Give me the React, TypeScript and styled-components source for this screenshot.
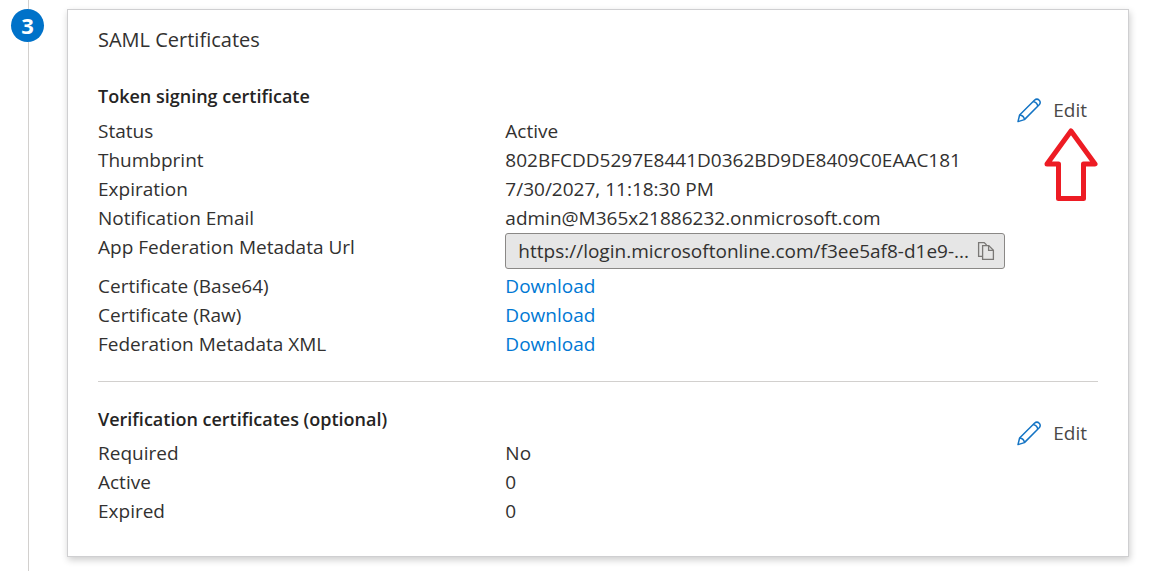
import React from "react";
import styled, { createGlobalStyle } from "styled-components";

const GlobalStyle = createGlobalStyle`
  * { box-sizing: border-box; }
  body {
    margin: 0;
    background: #fff;
    color: #323130;
    font-family: "Segoe UI", "Open Sans", "Noto Sans", sans-serif;
    font-size: 19px;
    line-height: 29px;
  }
`;

const Page = styled.main`
  display: flex;
  gap: 22px;
  padding: 0 34px 0 11px;
`;

const Stepper = styled.div`
  display: flex;
  flex-direction: column;
  align-items: center;
  flex: none;
  width: 34px;
`;

const Connector = styled.span<{ $grow?: boolean }>`
  width: 1px;
  height: 9px;
  flex: ${(p) => (p.$grow ? "1 0 auto" : "none")};
  background: #d2d0ce;
`;

const StepBadge = styled.span`
  display: flex;
  align-items: center;
  justify-content: center;
  align-self: flex-start;
  width: 33px;
  height: 33px;
  border-radius: 50%;
  background: #0072c9;
  color: #fff;
  font-size: 22px;
  font-weight: 700;
`;

const Card = styled.article`
  flex: 1;
  min-width: 0;
  margin: 9px 0 14px;
  padding: 15px 30px 30px;
  border: 1px solid #cfcfd1;
  background: #fff;
  box-shadow: 1px 3px 7px rgba(0, 0, 0, 0.2);
`;

const CardTitle = styled.h1`
  margin: 0 0 28px;
  font-size: 20px;
  line-height: 29px;
  font-weight: 400;
`;

const Section = styled.section`
  position: relative;
  display: flex;
  align-items: flex-start;

  & + & {
    margin-top: 22px;
    padding-top: 23px;
    border-top: 1px solid #d2d0ce;
  }
`;

const SectionBody = styled.div`
  flex: 1;
  min-width: 0;
`;

const SectionTitle = styled.h2`
  margin: 0 0 6px;
  font-size: 18px;
  line-height: 29px;
  font-weight: 600;
  color: #252423;

  ${Section} + ${Section} & {
    margin-bottom: 5px;
  }
`;

const Details = styled.table`
  width: 100%;
  table-layout: fixed;
  border-collapse: collapse;
`;

const Label = styled.th`
  width: 44.9%;
  padding: 0;
  text-align: left;
  vertical-align: top;
  font-weight: 400;
`;

const Value = styled.td`
  padding: 0;
  vertical-align: top;
`;

const DownloadLink = styled.a`
  color: #0078d4;
  text-decoration: none;
`;

const UrlField = styled.div`
  display: flex;
  align-items: center;
  height: 36px;
  margin-bottom: 3px;
  padding: 0 9px 0 12px;
  border: 1px solid #8a8886;
  border-radius: 3px;
  background: #e6e6e6;
`;

const UrlInput = styled.input`
  flex: 1;
  min-width: 0;
  height: 29px;
  padding: 0;
  border: 0;
  outline: 0;
  background: transparent;
  color: inherit;
  font: inherit;
  text-overflow: ellipsis;
`;

const CopyButton = styled.button`
  display: flex;
  padding: 0;
  border: 0;
  background: transparent;
  color: #7a7876;
  cursor: pointer;
`;

const EditButton = styled.button`
  display: flex;
  align-items: center;
  gap: 12px;
  flex: none;
  padding: 14px 11px 14px 12px;
  border: 0;
  background: transparent;
  color: #4a4948;
  font: inherit;
  cursor: pointer;
`;

const Pointer = styled.svg`
  position: absolute;
  top: 45px;
  right: 0;
`;

const PencilIcon = () => (
  <svg width="24" height="26" viewBox="0 1 24 26" fill="none" stroke="#1474c4" strokeWidth="1.5" strokeLinejoin="round" aria-hidden="true">
    <path d="M1 24.6 L2.6 18 L17.4 3.2 Q20 1 22.2 3.200 Q24.200 5.400 22.200 7.800 L7.400 22.600 Z" />
    <path d="M2.800 18 Q6.800 18.600 7.400 22.400" />
    <path d="M16.200 4.600 Q20 5.400 20.800 9" />
  </svg>
);

const CopyIcon = () => (
  <svg width="18" height="20" viewBox="0 0 18 20" fill="none" stroke="currentColor" strokeWidth="1.3" aria-hidden="true">
    <path d="M5.5 15.4 H1.6 V1.6 H7.2 L9.6 4" />
    <path d="M5.6 4.6 H11.8 L16.4 9.2 V18.4 H5.6 Z" />
    <path d="M11.6 4.8 V9.4 H16.2" />
  </svg>
);

type Kind = "text" | "url" | "link";
type Row = { label: string; value: string; kind?: Kind };

const signingRows: Row[] = [
  { label: "Status", value: "Active" },
  { label: "Thumbprint", value: "802BFCDD5297E8441D0362BD9DE8409C0EAAC181" },
  { label: "Expiration", value: "7/30/2027, 11:18:30 PM" },
  { label: "Notification Email", value: "admin@M365x21886232.onmicrosoft.com" },
  {
    label: "App Federation Metadata Url",
    value: "https://login.microsoftonline.com/f3ee5af8-d1e9-...",
    kind: "url",
  },
  { label: "Certificate (Base64)", value: "Download", kind: "link" },
  { label: "Certificate (Raw)", value: "Download", kind: "link" },
  { label: "Federation Metadata XML", value: "Download", kind: "link" },
];

const verificationRows: Row[] = [
  { label: "Required", value: "No" },
  { label: "Active", value: "0" },
  { label: "Expired", value: "0" },
];

const DetailRow = ({ label, value, kind }: Row) => (
  <tr>
    <Label scope="row">
      {kind === "url" ? <label htmlFor="metadata-url">{label}</label> : label}
    </Label>
    <Value>
      {kind === "url" && (
        <UrlField>
          <UrlInput id="metadata-url" type="text" readOnly value={value} />
          <CopyButton type="button" aria-label="Copy">
            <CopyIcon />
          </CopyButton>
        </UrlField>
      )}
      {kind === "link" && <DownloadLink href="#">{value}</DownloadLink>}
      {!kind && value}
    </Value>
  </tr>
);

type SectionProps = { title: string; rows: Row[]; children?: React.ReactNode };

const CertificateSection = ({ title, rows, children }: SectionProps) => (
  <Section>
    <SectionBody>
      <SectionTitle>{title}</SectionTitle>
      <Details>
        <tbody>
          {rows.map((row) => (
            <DetailRow key={row.label} {...row} />
          ))}
        </tbody>
      </Details>
    </SectionBody>
    <EditButton type="button">
      <PencilIcon />
      Edit
    </EditButton>
    {children}
  </Section>
);

export default function App() {
  return (
    <>
      <GlobalStyle />
      <Page>
        <Stepper>
          <Connector />
          <StepBadge>3</StepBadge>
          <Connector $grow />
        </Stepper>
        <Card>
          <CardTitle>SAML Certificates</CardTitle>
          <CertificateSection title="Token signing certificate" rows={signingRows}>
            <Pointer width="56" height="76" viewBox="0 0 56 76" fill="none" stroke="#ed1c24" strokeWidth="5" strokeLinejoin="round" aria-hidden="true">
              <path d="M29 4 L53 37 H41.5 V71.5 H16.5 V37 H5 Z" />
            </Pointer>
          </CertificateSection>
          <CertificateSection title="Verification certificates (optional)" rows={verificationRows} />
        </Card>
      </Page>
    </>
  );
}
